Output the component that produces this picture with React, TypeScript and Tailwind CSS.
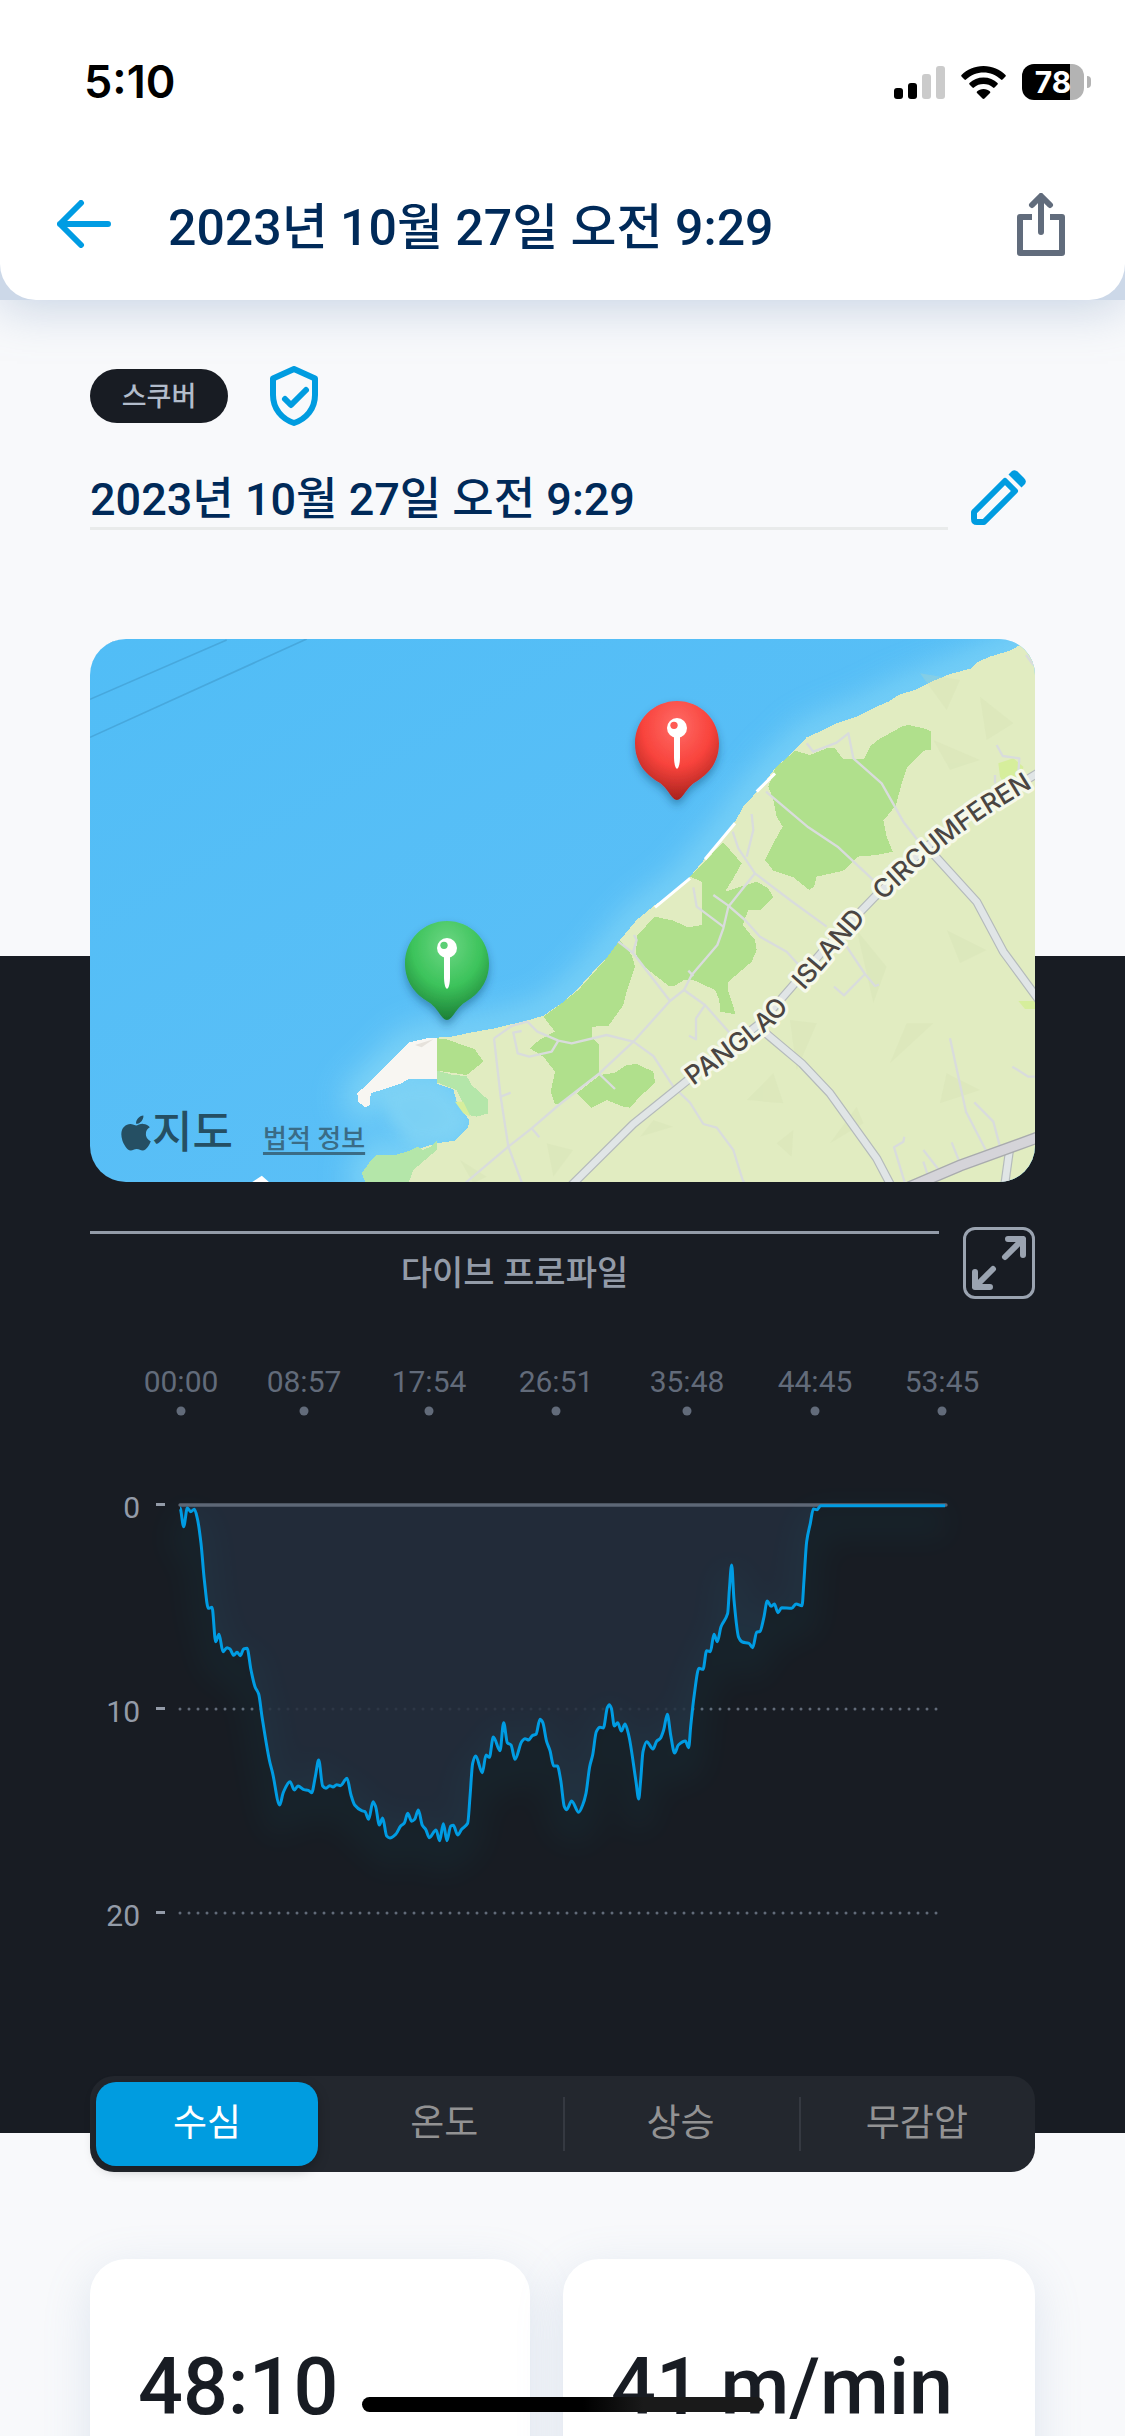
import { FaApple } from "react-icons/fa";
import type React from "react";

type Point = [number, number];

const timeTicks = [
  { label: "00:00", x: 91 },
  { label: "08:57", x: 214 },
  { label: "17:54", x: 339 },
  { label: "26:51", x: 466 },
  { label: "35:48", x: 597 },
  { label: "44:45", x: 725 },
  { label: "53:45", x: 852 },
];

const depthTicks = [
  { label: "0", y: 149 },
  { label: "10", y: 353 },
  { label: "20", y: 557 },
];

// depth samples, three units per chart pixel
const trace: Point[] = [
  [300, 84], [311, 140], [322, 84], [332, 95], [343, 88], [352, 115], [363, 190],
  [373, 300], [385, 385], [396, 382], [407, 485], [417, 463], [429, 515], [441, 503],
  [450, 507], [461, 526], [471, 517], [481, 527], [491, 507], [501, 505], [513, 570],
  [525, 620], [536, 642], [546, 710], [568, 840], [578, 880], [599, 975], [610, 937],
  [630, 905], [643, 930], [654, 918], [672, 929], [685, 931], [695, 938], [706, 890],
  [716, 840], [728, 918], [738, 925], [749, 917], [759, 921], [770, 914], [781, 917],
  [801, 895], [813, 945], [824, 975], [845, 992], [855, 995], [866, 1018], [879, 965],
  [887, 980], [898, 1035], [908, 1014], [920, 1068], [930, 1074], [948, 1062],
  [962, 1038], [973, 1029], [983, 1000], [995, 1024], [1004, 1018], [1015, 990],
  [1027, 1036], [1037, 1048], [1048, 1073], [1068, 1050], [1079, 1082], [1090, 1031],
  [1101, 1082], [1112, 1038], [1120, 1036], [1133, 1065], [1145, 1048], [1163, 1030],
  [1170, 950], [1178, 850], [1187, 828], [1207, 878], [1218, 825], [1228, 832],
  [1240, 771], [1260, 812], [1271, 728], [1282, 788], [1293, 795], [1305, 838],
  [1325, 785], [1335, 776], [1346, 780], [1357, 767], [1368, 763], [1380, 718],
  [1388, 727], [1400, 785], [1410, 812], [1421, 858], [1432, 858], [1442, 900],
  [1453, 980], [1460, 989], [1475, 963], [1496, 997], [1508, 975], [1518, 940],
  [1529, 860], [1538, 825], [1549, 755], [1560, 742], [1570, 744], [1582, 683],
  [1588, 674], [1594, 685], [1603, 738], [1613, 728], [1624, 753], [1635, 732],
  [1646, 765], [1668, 905], [1676, 957], [1682, 900], [1689, 815], [1700, 785],
  [1719, 807], [1730, 784], [1741, 775], [1751, 750], [1762, 703], [1772, 765],
  [1784, 819], [1795, 795], [1816, 783], [1826, 803], [1832, 740], [1842, 650],
  [1857, 565], [1869, 568], [1880, 512], [1891, 515], [1902, 463], [1912, 485],
  [1923, 440], [1943, 400], [1948, 330], [1955, 255], [1962, 360], [1976, 472],
  [1987, 486], [2007, 490], [2018, 503], [2030, 457], [2040, 454], [2051, 415],
  [2062, 363], [2073, 379], [2083, 372], [2094, 398], [2105, 383], [2135, 385],
  [2148, 372], [2166, 377], [2172, 300], [2180, 185], [2191, 130], [2200, 87],
  [2211, 89], [2222, 77], [2595, 77],
];

// monotone in x, so peaks never overshoot their sample
const smoothPath = (pts: Point[]) => {
  const slopes = pts.map((p, i) => {
    if (i === 0 || i === pts.length - 1) return 0;
    const a = (p[1] - pts[i - 1][1]) / (p[0] - pts[i - 1][0]);
    const b = (pts[i + 1][1] - p[1]) / (pts[i + 1][0] - p[0]);
    return a * b <= 0 ? 0 : (2 * a * b) / (a + b);
  });
  return pts.reduce((d, p, i) => {
    if (i === 0) return `M${p[0]} ${p[1]}`;
    const q = pts[i - 1];
    const h = (p[0] - q[0]) / 3;
    return `${d}C${q[0] + h} ${q[1] + slopes[i - 1] * h} ${p[0] - h} ${p[1] - slopes[i] * h} ${p[0]} ${p[1]}`;
  }, "");
};

const tracePath = smoothPath(trace);

const coast =
  "M2900 20L2840 27 2820 45 2795 60 2730 80 2695 95 2675 115 2610 132 2555 155 2510 178 2455 195 2425 215 2385 232 2325 262 2270 280 2230 300 2180 322 2145 360 2085 415 2040 475 1990 530 1965 575 1920 630 1880 680 1830 740 1780 790 1725 825 1670 870 1620 930 1575 990 1535 1030 1490 1080 1445 1120 1390 1157 1340 1172 1285 1185 1245 1195 1170 1208 1115 1220 1040 1225 985 1238 950 1275 910 1315 870 1355 832 1390 835 1415 855 1432 870 1425 872 1390 910 1378 960 1362 985 1348 1070 1348 1072 1362 1120 1378 1130 1415 1145 1440 1168 1470 1165 1490 1125 1532 1070 1540 1020 1555 990 1562 945 1575 890 1575 870 1595 850 1630 865 1680 2900 1680Z";

const woods = [
  "M2145 362L2190 375 2240 355 2265 355 2290 388 2352 388 2370 350 2390 332 2465 290 2485 285 2530 295 2552 303 2552 360 2530 362 2480 415 2465 460 2448 525 2410 572 2420 620 2438 665 2390 675 2333 680 2290 722 2210 740 2202 770 2188 780 2140 742 2080 722 2055 690 2080 640 2108 590 2090 560 2080 510 2065 470 2085 415Z",
  "M1930 637L1985 700 1960 745 1935 785 2030 755 2065 775 2080 803 2040 840 2005 840 1988 885 2025 930 2030 960 2015 995 1945 1055 1945 1085 1960 1130 1967 1153 1920 1145 1918 1110 1905 1080 1840 1050 1812 1050 1785 1067 1765 1067 1680 1000 1668 970 1672 915 1725 860 1780 872 1825 892 1865 885 1865 755 1830 740Z",
  "M1620 930L1655 975 1665 1010 1640 1085 1630 1125 1585 1188 1535 1190 1535 1220 1558 1245 1558 1330 1440 1422 1425 1422 1412 1385 1425 1325 1390 1280 1350 1255 1380 1228 1425 1205 1390 1160 1445 1120 1495 1080 1575 990Z",
  "M1560 1335L1605 1328 1640 1305 1670 1302 1720 1325 1725 1358 1680 1400 1650 1433 1630 1430 1580 1410 1535 1433 1490 1390Z",
  "M1072 1225L1100 1228 1185 1258 1210 1295 1160 1335 1072 1322Z",
];

const mangroves = [
  "M1072 1322L1120 1335 1160 1338 1175 1365 1225 1410 1225 1450 1190 1460 1165 1455 1130 1380 1072 1358Z",
  "M1070 1532L1070 1560 1000 1620 978 1680 865 1680 845 1630 870 1595 890 1575 945 1575 990 1562 1012 1550 1030 1560 1055 1548Z",
];

const lanes = [
  "M2180 340L2200 365 2270 338 2305 310 2320 385 2405 460 2470 575 2520 640",
  "M2058 485L2185 592 2275 652 2385 755",
  "M2015 552L2020 600 2000 680",
  "M1958 605L1975 655 2025 730 2130 810 2240 890",
  "M2025 730L1945 830 1930 895 1912 945 1835 1035 1812 1080 1770 1113 1660 1235 1558 1330 1440 1422 1355 1495 1285 1550 1155 1660",
  "M1840 772L1850 830 1930 890",
  "M1900 795L1945 827 1995 870 2040 920 2120 965 2170 1020",
  "M1615 935L1660 970 1770 1113M1662 915L1670 930 1658 970M1825 1022L1840 1038",
  "M1812 1080L1875 1125 1950 1210M1875 1125L1848 1165 1848 1228 1827 1217",
  "M1242 1225L1295 1188 1342 1175 1372 1205 1435 1232 1475 1240 1580 1215 1660 1235 1720 1278 1780 1370 1830 1418 1870 1482 1910 1493 1960 1560 1988 1650 2000 1670",
  "M1558 1332L1605 1377M2290 935L2355 1032 2385 1068 2397 1064M2355 1032L2292 1096 2262 1070",
  "M2610 1225L2658 1445 2720 1565M2683 1417L2740 1475 2760 1550M2797 1310L2845 1340 2880 1340",
  "M2473 1520L2470 1535 2442 1552 2475 1660M2530 1560L2575 1618M2530 1595L2543 1635M2615 1537L2640 1600",
  "M2750 345L2768 378 2818 385 2815 430M2745 435L2745 460M2838 75L2860 105",
  "M1242 1225L1262 1400 1285 1550 1330 1670M1325 1203L1300 1208 1313 1270 1348 1280 1415 1265 1435 1232M1262 1400L1292 1388M1355 1495L1378 1522",
];

const roads = [
  "M1460 1680L1660 1482 1830 1345 2040 1180 2240 950 2385 800 2540 650 2660 560 2880 425",
  "M2540 650L2690 815 2770 965 2880 1115",
  "M2040 1195L2165 1300 2250 1390 2390 1585 2440 1680",
  "M2790 1550L2772 1680",
];

// faint facets of the relief shading
const relief = [
  "M2520 130L2600 240 2640 150Z", "M2700 200L2720 330 2800 280Z", "M2560 330L2610 420 2700 390Z",
  "M2130 1170L2150 1320 2210 1180Z", "M2430 1300L2560 1180 2480 1180Z", "M2580 1420L2600 1330 2700 1380Z",
  "M2000 1410L2080 1330 2110 1420Z", "M1680 1520L1720 1470 1780 1490Z", "M2140 1500L2135 1580 2090 1540Z",
  "M2330 900L2420 1010 2380 1120Z", "M2600 900L2720 960 2640 1000Z", "M1180 1660L1140 1590 1220 1640Z",
  "M1400 1540L1420 1640 1480 1560Z", "M2250 1540L2330 1430 2350 1480Z",
];

const Pin: React.FC<{ x: number; y: number; fill: string; dot: string }> = ({ x, y, fill, dot }) => (
  <g transform={`translate(${x} ${y})`}>
    <g filter="url(#pinShadow)">
      <path
        d="M0-127C70-127 126-71 126 0C126 56 96 92 56 116C28 132 16 170 0 170C-16 170-28 132-56 116C-96 92-126 56-126 0C-126-71-70-127 0-127Z"
        fill={fill}
      />
    </g>
    <path d="M-9-20H9V40C9 60 5 76 0 76C-5 76-9 60-9 40Z" fill="#fff" />
    <circle cy="-46" r="30" fill="#fff" />
    <circle cx="-9" cy="-54" r="11" fill={dot} />
  </g>
);

const DiveMap = () => (
  <div className="relative -mt-[317px] overflow-hidden rounded-[36px]">
    <svg viewBox="30 27 2835 1629" className="block h-auto w-full" role="img" aria-label="지도">
      <defs>
        <linearGradient id="sea" x1="0" y1="0" x2="1" y2="1">
          <stop offset="0" stopColor="#51bdf6" />
          <stop offset="1" stopColor="#5fc0f7" />
        </linearGradient>
        <radialGradient id="redPin" cx="0.5" cy="0.25" r="0.75">
          <stop offset="0" stopColor="#ff6b66" />
          <stop offset="0.55" stopColor="#f8433c" />
          <stop offset="1" stopColor="#a8221d" />
        </radialGradient>
        <radialGradient id="greenPin" cx="0.5" cy="0.25" r="0.75">
          <stop offset="0" stopColor="#6cd683" />
          <stop offset="0.55" stopColor="#3cc35b" />
          <stop offset="1" stopColor="#1c7f36" />
        </radialGradient>
        <filter id="pinShadow" x="-30%" y="-30%" width="160%" height="160%">
          <feDropShadow dx="0" dy="14" stdDeviation="12" floodColor="#0b3a5c" floodOpacity="0.4" />
        </filter>
        <filter id="shallows" x="-20%" y="-20%" width="140%" height="140%">
          <feGaussianBlur stdDeviation="48" />
        </filter>
        <filter id="bayBlur" x="-20%" y="-20%" width="140%" height="140%">
          <feGaussianBlur stdDeviation="20" />
        </filter>
        <path id="roadName" d="M1840 1368L1930 1303 2010 1244 2076 1190 2190 1062 2352 872 2445 779 2544 688 2625 623 2720 556 2850 477 3100 354" />
      </defs>
      <rect x="30" y="27" width="2835" height="1629" fill="url(#sea)" />
      <path d={coast} fill="none" stroke="#8adaf6" strokeWidth="80" opacity="0.8" filter="url(#shallows)" />
      <path d="M900 1390L985 1360 1070 1360 1130 1415 1165 1470 1120 1530 1000 1550 930 1480Z" fill="#82d4f4" opacity="0.8" filter="url(#bayBlur)" />
      <path d="M30 62L220 -20M30 208L440 30M30 322L680 27" stroke="#47a8dd" strokeWidth="5" fill="none" />
      <path d={coast} fill="#e1ecc1" shapeRendering="crispEdges" />
      <g fill="#cfdcae" opacity="0.22">
        {relief.map((d) => (
          <path key={d} d={d} />
        ))}
      </g>
      <path d="M1072 1225L1040 1225 985 1238 950 1275 870 1355 832 1390 835 1415 855 1432 870 1425 872 1390 910 1378 960 1362 985 1348 1070 1348Z" fill="#f8f6f2" shapeRendering="crispEdges" />
      <path d="M1005 1245L1060 1228 1025 1252Z" fill="#e6e2dc" />
      <g fill="#b0e08c" shapeRendering="crispEdges">
        {woods.map((d) => (
          <path key={d} d={d} />
        ))}
      </g>
      <g fill="#b4e6a9" shapeRendering="crispEdges">
        {mangroves.map((d) => (
          <path key={d} d={d} />
        ))}
      </g>
      <path d="M2755 400L2800 385 2830 410 2825 450 2780 470 2760 440ZM2815 1113L2880 1113 2880 1137 2835 1137ZM1125 1415L1150 1415 1172 1460 1150 1450Z" fill="#d6ee9c" />
      <path d="M525 1656L545 1643 560 1656ZM2030 485L2085 430M1875 688L1965 580M1725 832L1830 745" fill="#fff" stroke="#fff" strokeWidth="9" />
      <g fill="none" stroke="#d9dcdc" strokeWidth="7" strokeLinejoin="round">
        {lanes.map((d) => (
          <path key={d} d={d} />
        ))}
      </g>
      <g fill="none" stroke="#b4babb" strokeWidth="27" strokeLinejoin="round">
        {roads.map((d) => (
          <path key={d} d={d} />
        ))}
      </g>
      <g fill="none" stroke="#e0e5e6" strokeWidth="20" strokeLinejoin="round">
        {roads.map((d) => (
          <path key={d} d={d} />
        ))}
      </g>
      <path d="M2480 1675L2640 1607 2880 1520" stroke="#a9abae" strokeWidth="36" fill="none" />
      <path d="M2480 1675L2640 1607 2880 1520" stroke="#d5d4d9" strokeWidth="28" fill="none" />
      <g
        fontFamily="Inter, sans-serif"
        fontSize="78"
        fontWeight="500"
        fill="#4a4542"
        stroke="#f5f8ea"
        strokeWidth="20"
        strokeLinejoin="round"
        paintOrder="stroke"
      >
        <text>
          <textPath href="#roadName" startOffset="0">PANGLAO</textPath>
        </text>
        <text>
          <textPath href="#roadName" startOffset="440">ISLAND</textPath>
        </text>
        <text>
          <textPath href="#roadName" startOffset="800">CIRCUMFEREN</textPath>
        </text>
      </g>
      <Pin x={1791} y={340} fill="url(#redPin)" dot="#ff5a54" />
      <Pin x={1101} y={1000} fill="url(#greenPin)" dot="#5ccf76" />
    </svg>
    <div className="absolute bottom-[22px] left-[30px] flex items-end gap-[30px] text-[#254f63]">
      <span className="flex items-center">
        <FaApple className="h-10 w-8" />
        <span className="text-[44px] leading-[54px] font-medium">지도</span>
      </span>
      <a href="#legal" className="text-[26px] leading-[42px] font-medium text-[#3a6c86] underline decoration-[3px] underline-offset-4">
        법적 정보
      </a>
    </div>
  </div>
);

const ProfileChart = () => (
  <svg viewBox="0 0 945 600" className="mt-[57px] block h-auto w-full" role="img" aria-label="다이브 프로파일">
    <defs>
      <filter id="glow" x="-20%" y="-20%" width="140%" height="150%">
        <feGaussianBlur stdDeviation="42" />
      </filter>
    </defs>
    <g fontSize="30" fill="#626b7a" textAnchor="middle">
      {timeTicks.map((tick) => (
        <g key={tick.label}>
          <text x={tick.x} y="36">{tick.label}</text>
          <circle cx={tick.x} cy="55" r="4.5" />
        </g>
      ))}
    </g>
    <g fontSize="30" fill="#939ba8" textAnchor="end">
      {depthTicks.map((tick) => (
        <g key={tick.label}>
          <text x="50" y={tick.y + 13}>{tick.label}</text>
          <rect x="66" y={tick.y - 2} width="9" height="3" />
        </g>
      ))}
    </g>
    <g stroke="#626b79" strokeWidth="3" strokeLinecap="round" strokeDasharray="0 9">
      <path d="M90 353H848" />
      <path d="M90 557H848" />
    </g>
    <svg x="0" y="124" width="945" height="460" viewBox="30 0 2835 1380" overflow="visible">
      <path d={`${tracePath}V75H300Z`} fill="#242e3d" fillOpacity="0.85" />
      <g transform="translate(0 50)">
        <path d={tracePath} fill="none" stroke="#0f9fb4" strokeWidth="90" opacity="0.05" filter="url(#glow)" />
      </g>
      <path d="M300 75H2598" stroke="#5d6776" strokeWidth="10" strokeLinecap="round" />
      <path d={tracePath} fill="none" stroke="#009ce3" strokeWidth="9" strokeLinejoin="round" />
    </svg>
  </svg>
);

const metrics = [
  { value: "수심", active: true },
  { value: "온도", active: false },
  { value: "상승", active: false },
  { value: "무감압", active: false },
];

const MetricTabs = () => (
  <div role="tablist" className="mt-[120px] -mb-[39px] flex h-24 rounded-[24px] bg-[#23272e] py-[6px]">
    {metrics.map((metric, i) => (
      <div key={metric.value} className="relative flex-1">
        {i > 1 && <span className="absolute top-[15px] left-0 h-[54px] w-[2px] bg-[#353941]" />}
        <button
          type="button"
          role="tab"
          aria-selected={metric.active}
          className={
            metric.active
              ? "ml-[6px] h-full w-[222px] rounded-[20px] bg-[#009ce0] text-[37px] text-white shadow-[0_4px_12px_rgba(0,0,0,0.25)]"
              : "h-full w-full text-[37px] text-[#929293]"
          }
        >
          {metric.value}
        </button>
      </div>
    ))}
  </div>
);

const StatusBar = () => (
  <div className="flex h-[164px] items-center justify-between pr-[34px] pl-[84px] font-[Inter,sans-serif]">
    <span className="text-[45px] font-semibold text-black">5:10</span>
    <div className="flex items-center">
      <svg viewBox="0 0 51 33" className="h-[33px] w-[51px]">
        <rect y="22" width="9" height="11" rx="3" />
        <rect x="14" y="17" width="9" height="16" rx="3" />
        <rect x="28" y="8" width="9" height="25" rx="3" fill="#cbcbcb" />
        <rect x="42" width="9" height="33" rx="3" fill="#cbcbcb" />
      </svg>
      <svg viewBox="0 0 45 33" className="ml-4 h-[33px] w-[45px]">
        <path d="M22.500 0C31.500 0 39 3.500 44.500 9C45 9.500 45 10 44.500 10.500L41.500 13.500C41 14 40.500 14 40 13.500C35 9 29 6.500 22.500 6.500S10 9 5 13.500C4.500 14 4 14 3.500 13.500L.5 10.500C0 10 0 9.500.5 9C6 3.500 13.500 0 22.500 0Z" />
        <path d="M22.500 11.500C28 11.500 33 13.500 36.500 17C37 17.500 37 18 36.500 18.500L33.500 21.500C33 22 32.500 22 32 21.500C29.500 19 26 18 22.500 18S15.500 19 13 21.500C12.500 22 12 22 11.500 21.500L8.500 18.500C8 18 8 17.500 8.500 17C12 13.500 17 11.500 22.500 11.500Z" />
        <path d="M22.500 23C25 23 27.500 24 29 25.500C29.500 26 29.500 26.500 29 27L23.500 32.500C23 33 22 33 21.500 32.500L16 27C15.500 26.500 15.500 26 16 25.500C17.500 24 20 23 22.500 23Z" />
      </svg>
      <div className="ml-4 flex h-9 w-[62px] items-center justify-center rounded-[12px] bg-[linear-gradient(90deg,#000_78%,#b3b3b3_78%)] text-[30px] font-bold text-white">
        78
      </div>
      <span className="ml-[3px] h-3 w-1 rounded-r-full bg-[#b3b3b3]" />
    </div>
  </div>
);

export default function App() {
  return (
    <div className="relative flex h-screen flex-col overflow-hidden bg-[#f8f9fb] font-[Roboto,'Noto_Sans_CJK_KR',sans-serif]">
      <div className="z-10 shrink-0 bg-[#ccd8e8] shadow-[0_6px_48px_rgba(120,150,190,0.4)]">
        <header className="rounded-b-[36px] bg-white pb-4">
          <StatusBar />
          <nav className="flex h-[120px] items-center pr-[60px] pl-[57px]">
            <button type="button" aria-label="뒤로" className="text-[#009ce3]">
              <svg viewBox="0 0 54 48" className="h-12 w-[54px]" fill="none" stroke="currentColor" strokeWidth="6" strokeLinecap="round" strokeLinejoin="round">
                <path d="M24 3L3 24L24 45M3 24H51" />
              </svg>
            </button>
            <h1 className="ml-[57px] flex-1 pt-2 text-[50px] font-medium text-[#002a59]">2023년 10월 27일 오전 9:29</h1>
            <button type="button" aria-label="공유" className="text-[#616c7c]">
              <svg viewBox="0 0 48 63" className="h-[63px] w-12" fill="none" stroke="currentColor" strokeWidth="6" strokeLinejoin="round">
                <path d="M15 24H3V60H45V24H33" />
                <path d="M24 39V4M15 12L24 3L33 12" strokeLinecap="round" />
              </svg>
            </button>
          </nav>
        </header>
      </div>

      <main>
        <div className="px-[90px] pt-[66px]">
          <div className="flex h-[60px] items-center gap-[42px]">
            <span className="flex h-[54px] w-[138px] items-center justify-center rounded-full bg-[#181c23] pt-[2px] text-[27px] font-medium text-[#b2bccb]">
              스쿠버
            </span>
            <svg viewBox="0 0 48 60" className="h-[60px] w-12" fill="none" stroke="#009ce0" strokeWidth="6" strokeLinejoin="round" strokeLinecap="round">
              <path d="M24 3L45 12.500V29C45 43 36 53 24 57C12 53 3 43 3 29V12.500Z" />
              <path d="M15 33L21 39L36 24" />
            </svg>
          </div>
          <div className="mt-9 flex h-[68px]">
            <h2 className="flex-1 border-b-[3px] border-[#e9ebeb] text-[45px] leading-[76px] font-medium text-[#002a59]">
              2023년 10월 27일 오전 9:29
            </h2>
            <button type="button" aria-label="편집" className="ml-[18px] flex w-[69px] items-center pt-[4px] pl-[4px] text-[#009ce0]">
              <svg viewBox="0 0 56 56" className="h-14 w-14">
                <path d="M4 42V49Q4 52 7 52H14L45 21L35 11Z" fill="none" stroke="currentColor" strokeWidth="6" strokeLinejoin="round" />
                <path d="M38.500 4.500L42 1Q45 -1 48 2L54 8Q57 11 55 14L51.500 17.500Z" fill="currentColor" />
              </svg>
            </button>
          </div>
        </div>

        <section className="mt-[426px] flex flex-col bg-[#181c23] px-[90px]">
          <DiveMap />
          <div className="mt-[45px] flex h-[72px] gap-6">
            <h3 className="mt-1 flex-1 border-t-[3px] border-[#939ba8] pt-[14px] text-center text-[34px] font-medium text-[#939ba8]">
              다이브 프로파일
            </h3>
            <button type="button" aria-label="전체 화면" className="flex w-[72px] items-center justify-center rounded-[12px] border-[3px] border-[#9aa3b0] text-[#9aa3b0]">
              <svg viewBox="0 0 54 54" className="h-[54px] w-[54px]" fill="none" stroke="currentColor" strokeWidth="6" strokeLinecap="round" strokeLinejoin="round">
                <path d="M33 21L51 3M36 3H51V19M21 33L3 51M3 36V51H18" />
              </svg>
            </button>
          </div>
          <ProfileChart />
          <MetricTabs />
        </section>

        <div className="mt-[126px] flex gap-[33px] px-[90px] text-[79px] leading-[96px] font-medium text-[#181c23]">
          <div className="h-[300px] w-[440px] rounded-[36px] bg-white px-12 pt-20 shadow-[0_12px_48px_rgba(120,150,190,0.2)]">
            48:10
          </div>
          <div className="h-[300px] flex-1 rounded-[36px] bg-white px-12 pt-20 shadow-[0_12px_48px_rgba(120,150,190,0.2)]">
            41 m/min
          </div>
        </div>
      </main>

      <div className="absolute bottom-6 left-1/2 h-[15px] w-[402px] -translate-x-1/2 rounded-full bg-[linear-gradient(90deg,#000_55%,#1a1a1a_70%)]" />
    </div>
  );
}
